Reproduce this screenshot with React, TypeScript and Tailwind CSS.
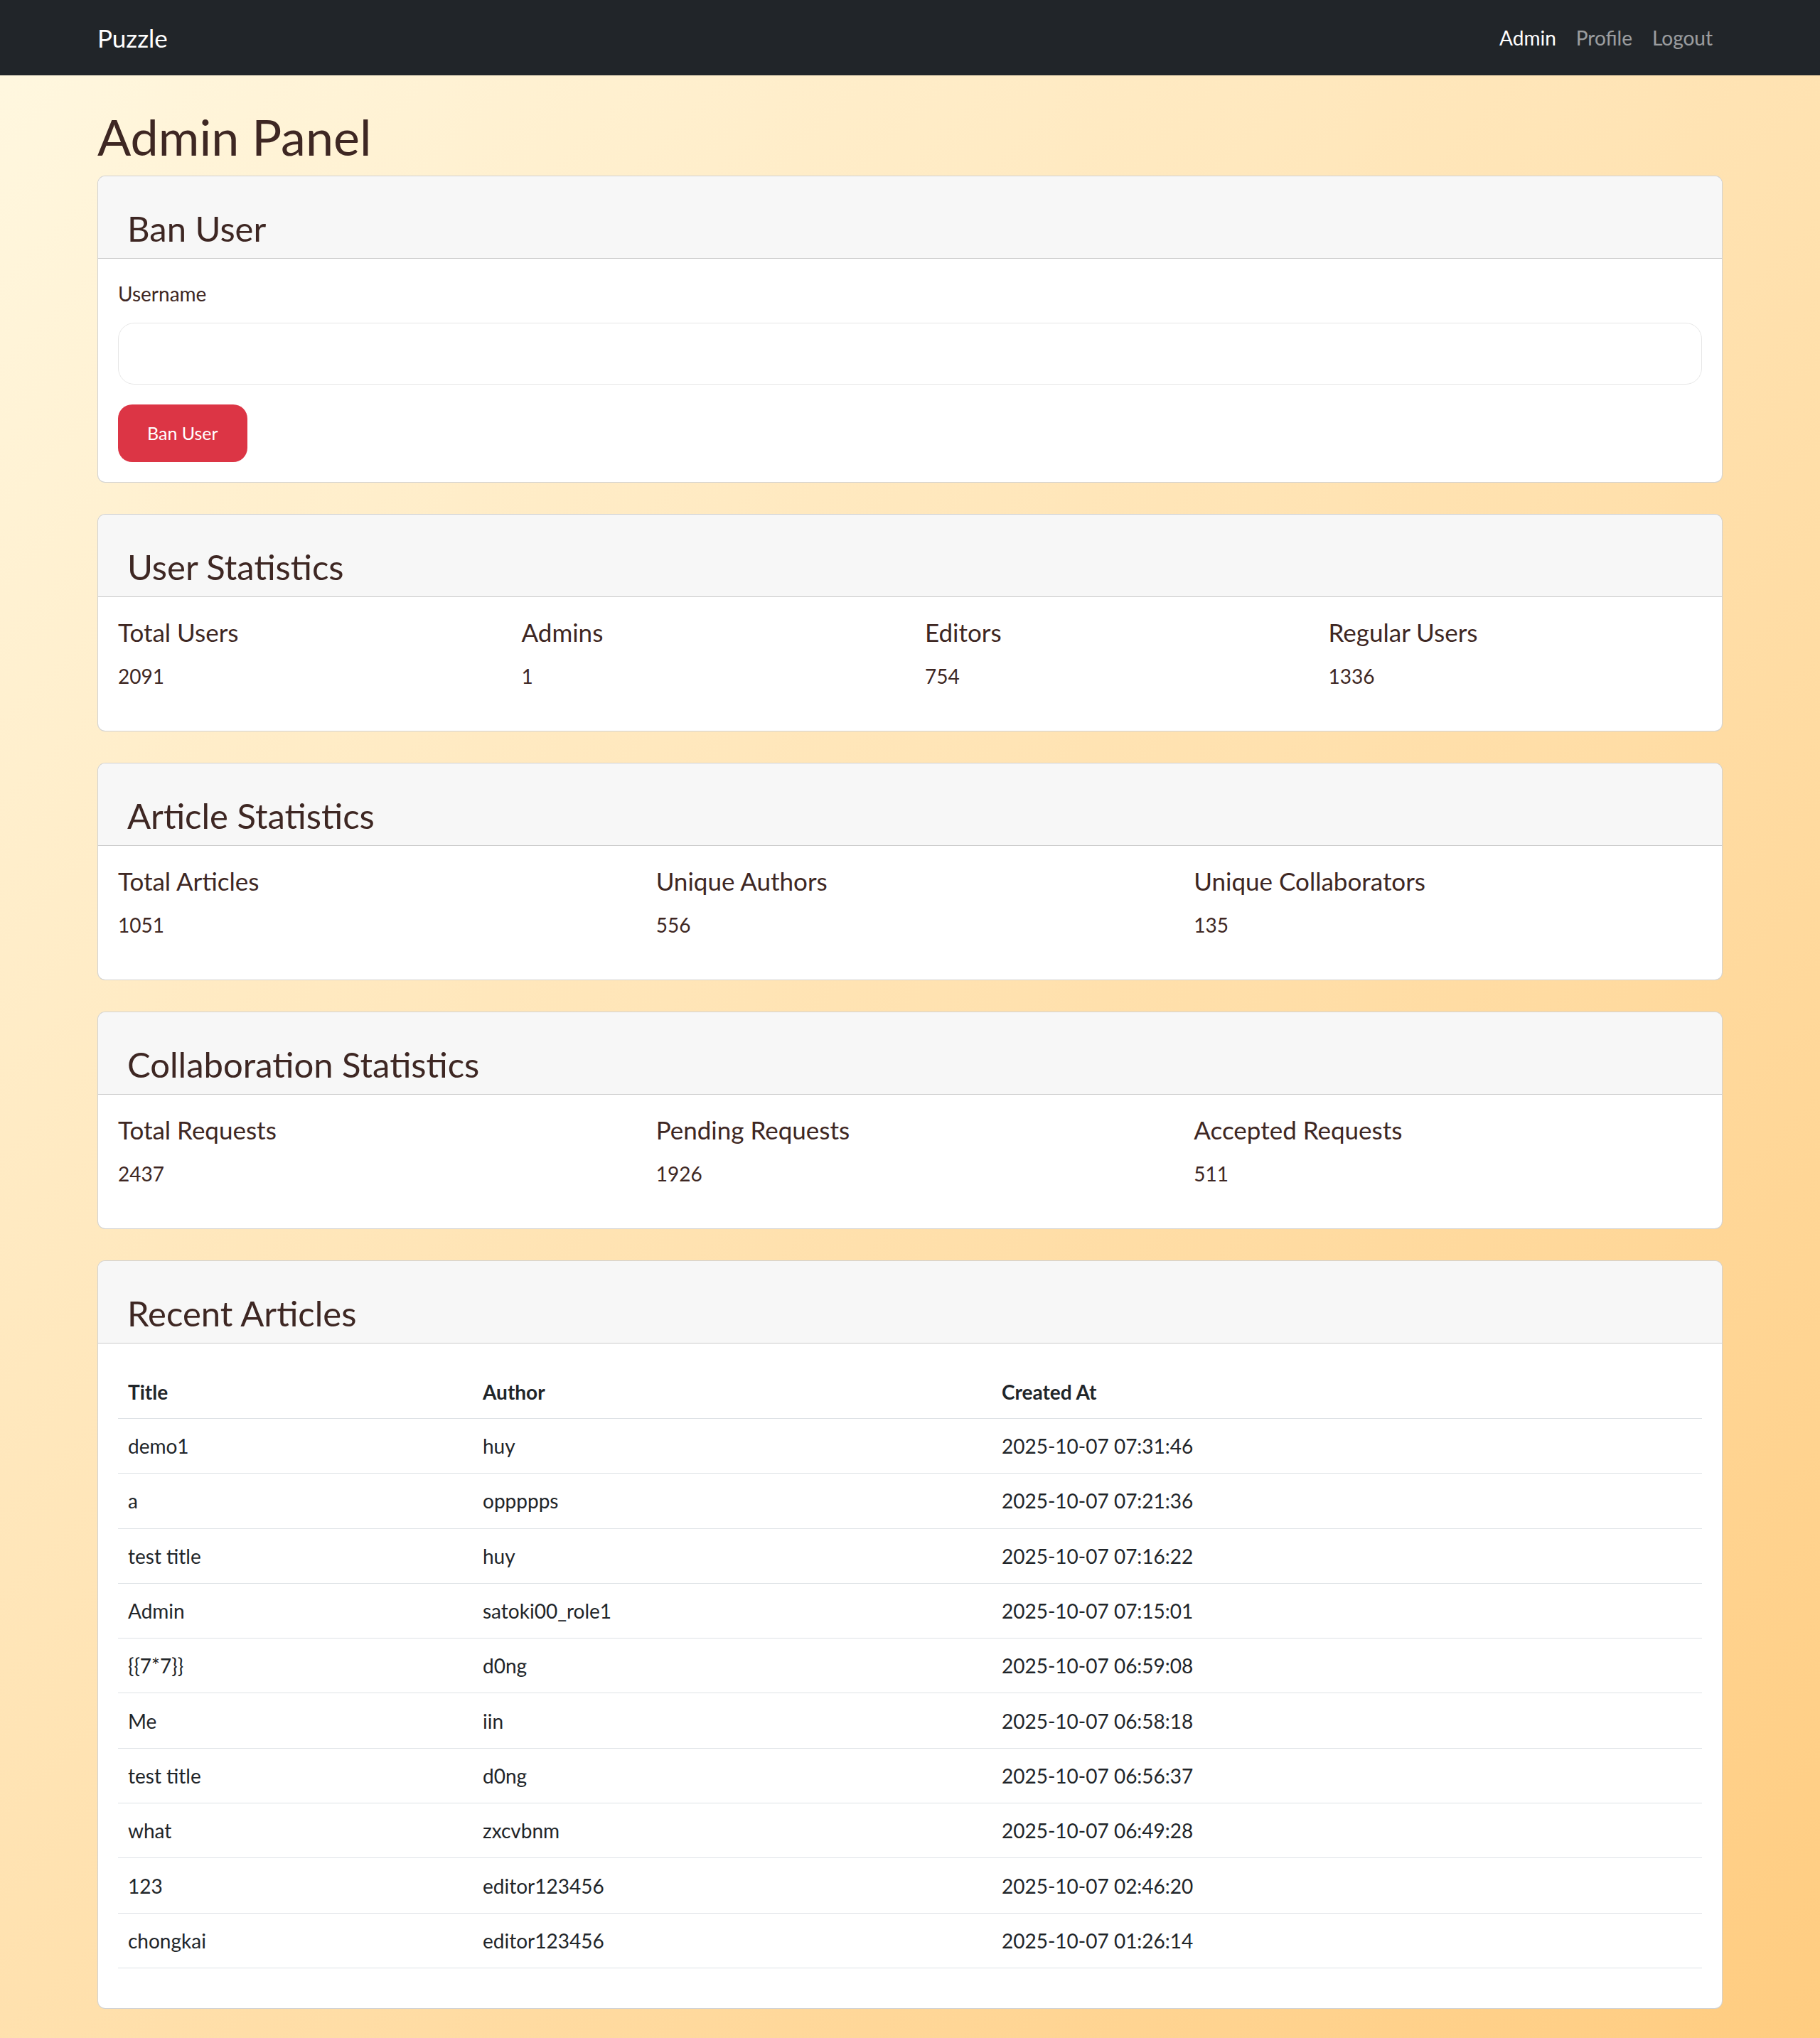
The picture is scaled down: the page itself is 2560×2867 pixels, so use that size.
import React from "react"

const userStats = [
  { label: "Total Users", value: "2091" },
  { label: "Admins", value: "1" },
  { label: "Editors", value: "754" },
  { label: "Regular Users", value: "1336" },
]

const articleStats = [
  { label: "Total Articles", value: "1051" },
  { label: "Unique Authors", value: "556" },
  { label: "Unique Collaborators", value: "135" },
]

const collabStats = [
  { label: "Total Requests", value: "2437" },
  { label: "Pending Requests", value: "1926" },
  { label: "Accepted Requests", value: "511" },
]

const articles = [
  { title: "demo1", author: "huy", created: "2025-10-07 07:31:46" },
  { title: "a", author: "oppppps", created: "2025-10-07 07:21:36" },
  { title: "test title", author: "huy", created: "2025-10-07 07:16:22" },
  { title: "Admin", author: "satoki00_role1", created: "2025-10-07 07:15:01" },
  { title: "{{7*7}}", author: "d0ng", created: "2025-10-07 06:59:08" },
  { title: "Me", author: "iin", created: "2025-10-07 06:58:18" },
  { title: "test title", author: "d0ng", created: "2025-10-07 06:56:37" },
  { title: "what", author: "zxcvbnm", created: "2025-10-07 06:49:28" },
  { title: "123", author: "editor123456", created: "2025-10-07 02:46:20" },
  { title: "chongkai", author: "editor123456", created: "2025-10-07 01:26:14" },
]

function Card({ title, children }: { title: string; children: React.ReactNode }) {
  return (
    <section className="mb-[44px] rounded-[11px] border border-black/[0.175] bg-white overflow-hidden">
      <div className="bg-[#f7f7f7] border-b border-black/[0.175] pt-[44px] pb-[12px] pl-[41px]">
        <h3 className="text-[49px] leading-[59px] text-[#3e2723]">{title}</h3>
      </div>
      <div className="p-[28px]">{children}</div>
    </section>
  )
}

function StatGrid({ items, cols }: { items: { label: string; value: string }[]; cols: 3 | 4 }) {
  return (
    <div className={`grid gap-x-[42px] ${cols === 4 ? "grid-cols-4" : "grid-cols-3"}`}>
      {items.map((s) => (
        <div key={s.label}>
          <h5 className="text-[35px] leading-[42px] mb-[20px] text-[#3e2723]">{s.label}</h5>
          <p className="text-[28px] leading-[42px] mb-[28px] text-[#3e2723]">{s.value}</p>
        </div>
      ))}
    </div>
  )
}

export default function App() {
  return (
    <div className="min-h-screen bg-[linear-gradient(135deg,#fff8e1,#ffcc80)] font-['Lato',sans-serif]">
      {/* Navbar */}
      <nav className="bg-[#212529] h-[106px]">
        <div className="max-w-[2286px] mx-auto h-full flex items-center justify-between">
          <span className="text-[35px] text-white">Puzzle</span>
          <div className="flex text-[28px]">
            <a className="px-[14px] text-white">Admin</a>
            <a className="px-[14px] text-white/55">Profile</a>
            <a className="px-[14px] text-white/55">Logout</a>
          </div>
        </div>
      </nav>

      <main className="max-w-[2286px] mx-auto pt-[44px] pb-[1px]">
        <h1 className="text-[70px] leading-[85px] mb-[12px] text-[#3e2723]">Admin Panel</h1>

        <Card title="Ban User">
          <label className="block text-[28px] leading-[42px] mb-[20px] text-[#3e2723]">Username</label>
          <input
            type="text"
            className="block w-full h-[87px] rounded-[23px] border border-[#e6e6e6] bg-white px-[21px] text-[28px] outline-none"
          />
          <button className="mt-[28px] h-[81px] px-[41px] rounded-[20px] bg-[#dc3545] text-white text-[25px]">
            Ban User
          </button>
        </Card>

        <Card title="User Statistics">
          <StatGrid items={userStats} cols={4} />
        </Card>

        <Card title="Article Statistics">
          <StatGrid items={articleStats} cols={3} />
        </Card>

        <Card title="Collaboration Statistics">
          <StatGrid items={collabStats} cols={3} />
        </Card>

        <Card title="Recent Articles">
          <div className="mb-[28px] text-[28px] text-[#212529]">
            <div className="grid grid-cols-[499px_730px_1fr] h-[78px] items-center border-b border-[#dee2e6] font-bold">
              <div className="px-[14px] pt-[2px]">Title</div>
              <div className="px-[14px] pt-[2px]">Author</div>
              <div className="px-[14px] pt-[2px]">Created At</div>
            </div>
            {articles.map((a, i) => (
              <div
                key={i}
                className="grid grid-cols-[499px_730px_1fr] h-[77.3px] items-center border-b border-[#dee2e6]"
              >
                <div className="px-[14px]">{a.title}</div>
                <div className="px-[14px]">{a.author}</div>
                <div className="px-[14px]">{a.created}</div>
              </div>
            ))}
          </div>
        </Card>
      </main>
    </div>
  )
}
